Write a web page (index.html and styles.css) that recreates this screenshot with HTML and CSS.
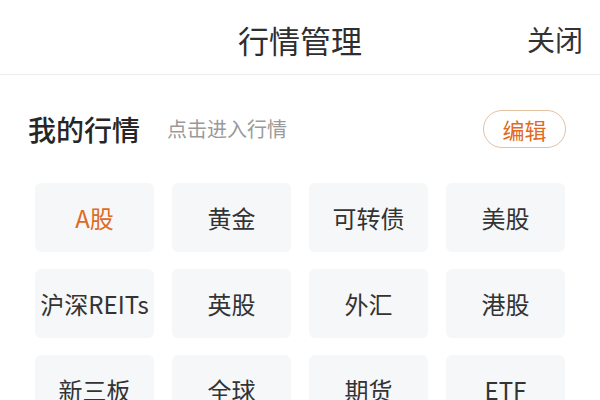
FILE: index.html
```html
<!DOCTYPE html>
<html lang="zh-CN">
<head>
<meta charset="utf-8">
<title>行情管理</title>
<link rel="stylesheet" href="styles.css">
</head>
<body>
<div class="page">
  <header class="topbar">
    <div class="spacer"></div>
    <h1 class="title">行情管理</h1>
    <div class="close">关闭</div>
  </header>
  <section class="mine">
    <div class="mine-head">
      <span class="mine-title">我的行情</span>
      <span class="mine-hint">点击进入行情</span>
      <button class="edit-btn">编辑</button>
    </div>
    <div class="grid">
      <div class="cell active">A股</div>
      <div class="cell">黄金</div>
      <div class="cell">可转债</div>
      <div class="cell">美股</div>
      <div class="cell">沪深REITs</div>
      <div class="cell">英股</div>
      <div class="cell">外汇</div>
      <div class="cell">港股</div>
      <div class="cell">新三板</div>
      <div class="cell">全球</div>
      <div class="cell">期货</div>
      <div class="cell">ETF</div>
    </div>
  </section>
</div>
</body>
</html>
```

FILE: styles.css
```css
* { box-sizing: border-box; }
html, body {
  margin: 0;
  padding: 0;
  background: #ffffff;
}
body {
  font-family: "Noto Sans CJK SC", "Noto Sans", sans-serif;
  color: #333333;
  width: 600px;
  height: 400px;
  overflow: hidden;
}
.topbar {
  display: grid;
  grid-template-columns: 1fr auto 1fr;
  align-items: center;
  height: 75px;
  padding-top: 4px;
  border-bottom: 1px solid #ececec;
}
.title {
  margin: 0;
  font-size: 31px;
  font-weight: 400;
  color: #2e2e2e;
  line-height: 1;
}
.close {
  justify-self: end;
  padding-right: 17px;
  font-size: 28px;
  color: #333333;
  line-height: 1;
}
.mine-head {
  display: flex;
  align-items: center;
  height: 38px;
  margin-top: 35px;
  padding: 0 34px 0 28px;
}
.mine-title {
  font-size: 28px;
  font-weight: 500;
  color: #262626;
  line-height: 1;
}
.mine-hint {
  margin-left: 27px;
  font-size: 20px;
  color: #9a9a9a;
  line-height: 1;
}
.edit-btn {
  margin-left: auto;
  width: 83px;
  height: 38px;
  border: 1px solid #e4c0a3;
  border-radius: 19px;
  background: #ffffff;
  color: #df6b1e;
  font-family: inherit;
  font-size: 22px;
  line-height: 1;
  padding: 0;
}
.grid {
  display: grid;
  grid-template-columns: repeat(4, 1fr);
  column-gap: 18px;
  row-gap: 17px;
  margin-top: 35px;
  padding: 0 35px;
}
.cell {
  display: flex;
  align-items: center;
  justify-content: center;
  height: 69px;
  border-radius: 6px;
  background: #f6f7f9;
  font-size: 24px;
  color: #333333;
  line-height: 1;
}
.cell.active {
  color: #df6b1e;
}
```
